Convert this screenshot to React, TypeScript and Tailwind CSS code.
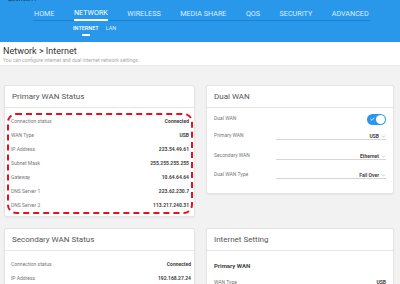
import { ChevronDown } from "lucide-react";

const navItems = ["HOME", "NETWORK", "WIRELESS", "MEDIA SHARE", "QOS", "SECURITY", "ADVANCED"];

const primaryRows = [
  ["Connection status", "Connected"],
  ["WAN Type", "USB"],
  ["IP Address", "223.54.49.61"],
  ["Subnet Mask", "255.255.255.255"],
  ["Gateway", "10.64.64.64"],
  ["DNS Server 1", "223.62.230.7"],
  ["DNS Server 2", "113.217.240.31"],
];

const CardHead = ({ title }: { title: string }) => (
  <div className="h-[22px] flex items-center px-[7px] border-b border-[#e6e6e6] text-[8px] text-[#555]">{title}</div>
);

const Row = ({ label, value }: { label: string; value: string }) => (
  <div className="h-[13.9px] flex items-center justify-between text-[5px]">
    <span className="text-[#777]">{label}</span>
    <span className="font-bold text-[#444]">{value}</span>
  </div>
);

const SelectRow = ({ label, value, h }: { label: string; value: string; h: string }) => (
  <div className={`flex items-end justify-between ${h}`}>
    <span className="text-[5px] text-[#777] leading-[6px] mb-[2px]">{label}</span>
    <div className="w-[110px] border-b border-[#d6d6d6] flex items-center justify-end gap-[2px] h-[7px]">
      <span className="text-[5px] font-bold text-[#444] leading-[6px]">{value}</span>
      <ChevronDown className="w-[5px] h-[5px] text-[#888]" strokeWidth={2} />
    </div>
  </div>
);

const App = () => {
  return (
    <div className="w-[400px] h-[284px] overflow-hidden bg-[#f2f2f2] font-['Roboto',sans-serif]">
      <header className="h-[42px] bg-[#2a98ea]">
        <div className="h-[7px] overflow-hidden pl-[8px]">
          <div className="text-[4.5px] font-bold text-[#14456e] leading-[4px] -mt-[2px]">QUANTUM T1</div>
        </div>
        <nav className="ml-[33px] w-[337px] h-[14px] border-b border-[#1f80cf] flex gap-[19.5px] pl-[1px]">
          {navItems.map((n) => (
            <span
              key={n}
              className={
                n === "NETWORK"
                  ? "h-[14px] flex items-center whitespace-nowrap text-[7.2px] text-white border-b-2 border-white -mb-[1px] pt-[1px]"
                  : "h-[14px] flex items-center whitespace-nowrap text-[7.2px] text-[#dbeeff]"
              }
            >
              {n}
            </span>
          ))}
        </nav>
        <div className="ml-[73px] flex gap-[7px] mt-[4px]">
          <div className="flex flex-col items-center">
            <span className="text-[5.5px] font-medium text-white leading-[7px]">INTERNET</span>
            <span className="mt-[2px] w-[8px] h-[2px] bg-white" />
          </div>
          <span className="text-[5.5px] text-[#dbeeff] leading-[7px]">LAN</span>
        </div>
      </header>

      <section className="h-[24px] bg-white px-[3px] pt-[4px] border-b border-[#eaeaea]">
        <div className="text-[9px] text-[#333] leading-[11px]">Network &gt; Internet</div>
        <div className="text-[5px] text-[#aaa] leading-[6px]">You can configure internet and dual internet network settings.</div>
      </section>

      <main className="grid grid-cols-[191px_188px] gap-x-[11px] gap-y-[11px] pl-[4px] pt-[19px] items-start">
        <div className="bg-white border border-[#e4e4e4] rounded-[2px] shadow-[0_1px_2px_rgba(0,0,0,0.05)]">
          <CardHead title="Primary WAN Status" />
          <div className="pt-[5px] pb-[2px] pl-[2px] pr-[1px]">
            <div className="border-2 border-dashed border-[#e8101a] rounded-[9px] px-[2px]">
              {primaryRows.map(([l, v]) => (
                <Row key={l} label={l} value={v} />
              ))}
            </div>
          </div>
        </div>

        <div className="bg-white border border-[#e4e4e4] rounded-[2px] shadow-[0_1px_2px_rgba(0,0,0,0.05)]">
          <CardHead title="Dual WAN" />
          <div className="px-[7px] pt-[4px] pb-[14px]">
            <div className="h-[14px] flex items-center justify-between">
              <span className="text-[5px] text-[#777]">Dual WAN</span>
              <div className="w-[19px] h-[11px] rounded-full bg-[#2a98ea] flex items-center justify-between pl-[3px] pr-[1px]">
                <svg width="5" height="4" viewBox="0 0 5 4">
                  <path d="M0.5 2 L2 3.3 L4.5 0.7" stroke="white" strokeWidth="0.8" fill="none" />
                </svg>
                <span className="w-[9px] h-[9px] rounded-full bg-white" />
              </div>
            </div>
            <SelectRow label="Primary WAN" value="USB" h="h-[14px]" />
            <SelectRow label="Secondary WAN" value="Ethernet" h="h-[20px]" />
            <SelectRow label="Dual WAN Type" value="Fail Over" h="h-[19px]" />
          </div>
        </div>

        <div className="bg-white border border-[#e4e4e4] rounded-[2px] shadow-[0_1px_2px_rgba(0,0,0,0.05)]">
          <CardHead title="Secondary WAN Status" />
          <div className="pt-[7px] pl-[6px] pr-[3px] pb-[6px]">
            <Row label="Connection status" value="Connected" />
            <Row label="IP Address" value="192.168.27.24" />
            <Row label="Subnet Mask" value="255.255.255.0" />
          </div>
        </div>

        <div className="bg-white border border-[#e4e4e4] rounded-[2px] shadow-[0_1px_2px_rgba(0,0,0,0.05)]">
          <CardHead title="Internet Setting" />
          <div className="pt-[10px] px-[7px] pb-[6px]">
            <div className="text-[6px] font-bold text-[#444] leading-[10px]">Primary WAN</div>
            <div className="mt-[5px]">
              <Row label="WAN Type" value="USB" />
            </div>
          </div>
        </div>
      </main>
    </div>
  );
};

export default App;
